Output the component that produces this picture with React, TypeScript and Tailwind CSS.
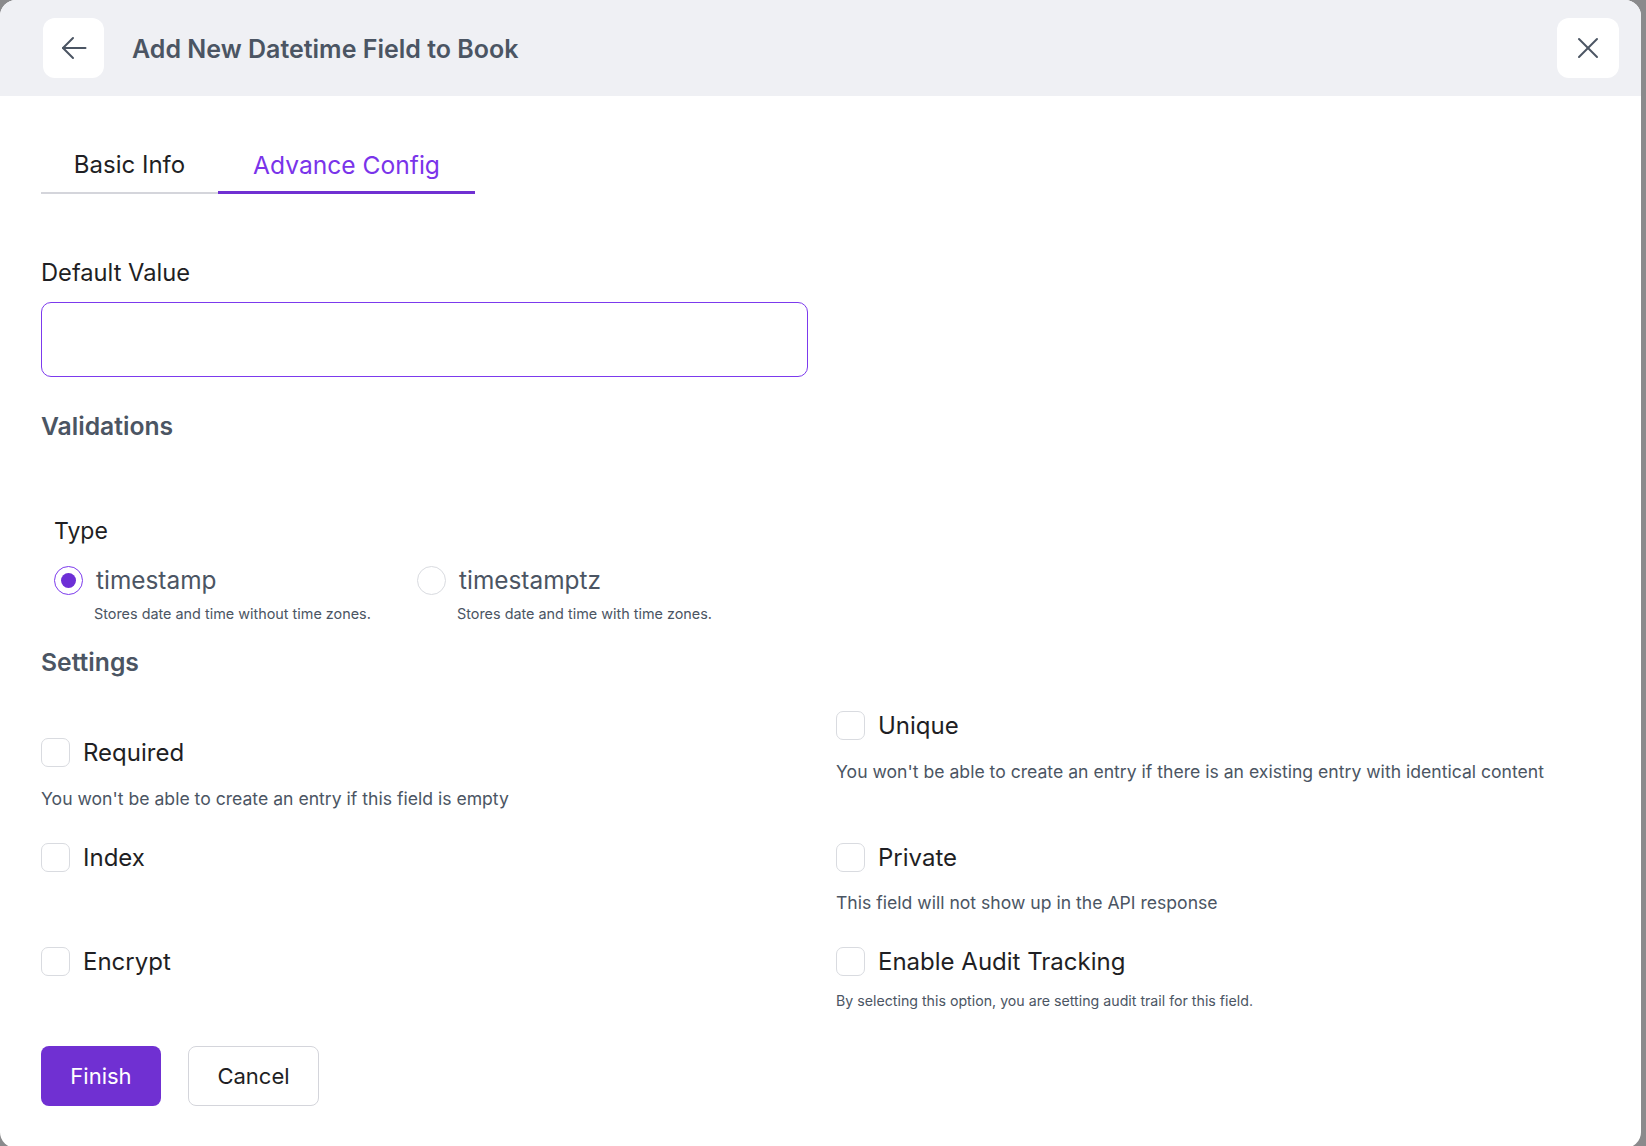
import React from "react";

const font = { fontFamily: "Inter, 'Noto Sans', 'Liberation Sans', sans-serif" };

function BackIcon() {
  return (
    <svg width="26" height="24" viewBox="0 0 26 24" fill="none" stroke="#4b5563" strokeWidth="2" strokeLinecap="round" strokeLinejoin="round">
      <path d="M24.5 12H2" />
      <path d="M12 2L2 12l10 10" />
    </svg>
  );
}

function CloseIcon() {
  return (
    <svg width="22" height="22" viewBox="0 0 22 22" fill="none" stroke="#4b5563" strokeWidth="2" strokeLinecap="round">
      <path d="M2 2l18 18" />
      <path d="M20 2L2 20" />
    </svg>
  );
}

function Radio({ checked }: { checked?: boolean }) {
  return (
    <span
      className={
        checked
          ? "w-[29px] h-[29px] rounded-full border-[1.5px] border-[#7c3aed] flex items-center justify-center shrink-0"
          : "w-[29px] h-[29px] rounded-full border border-[#d9dbe0] shrink-0"
      }
    >
      {checked && <span className="w-[15px] h-[15px] rounded-full bg-[#6d2fd6]" />}
    </span>
  );
}

function RadioOption({ label, desc, checked }: { label: string; desc: string; checked?: boolean }) {
  return (
    <div className="w-[363px]">
      <div className="flex items-center h-[32px] gap-[13px]">
        <Radio checked={checked} />
        <span className="text-[24.4px] leading-[32px] text-[#4b5563]">{label}</span>
      </div>
      <div className="mt-[8px] ml-[40px] text-[14.4px] leading-[20px] text-[#4b5563]">{desc}</div>
    </div>
  );
}

function Check({ label, desc, small, descGap = 18 }: { label: string; desc?: string; small?: boolean; descGap?: number }) {
  return (
    <div>
      <label className="flex items-center gap-[13px] h-[29px]">
        <span className="w-[29px] h-[29px] rounded-[7px] border border-[#d9dbe0] bg-white shrink-0" />
        <span className="text-[24px] leading-[32px] text-[#1f1f24]">{label}</span>
      </label>
      {desc && (
        <div
          className={
            small
              ? "mt-[15px] text-[14.2px] leading-[20px] text-[#4b5563]"
              : descGap === 17
              ? "mt-[17px] text-[17.6px] leading-[28px] text-[#4b5563]"
              : "mt-[18px] text-[17.6px] leading-[28px] text-[#4b5563]"
          }
        >
          {desc}
        </div>
      )}
    </div>
  );
}

export default function App() {
  return (
    <div className="w-[1646px] h-[1146px] overflow-hidden bg-[#8a8a8c]" style={font}>
      <div className="w-[1641px] h-[1148px] rounded-2xl bg-white overflow-hidden flex flex-col">
        {/* header */}
        <div className="h-[96px] bg-[#eff0f4] flex items-center pl-[43px] pr-[22px] shrink-0">
          <button className="w-[61px] h-[60px] bg-white rounded-xl flex items-center justify-center">
            <BackIcon />
          </button>
          <h1 className="ml-[28px] pt-[3px] text-[25px] font-semibold text-[#4b5563]">
            Add New Datetime Field to Book
          </h1>
          <button className="ml-auto w-[62px] h-[60px] bg-white rounded-xl flex items-center justify-center">
            <CloseIcon />
          </button>
        </div>

        {/* body */}
        <div className="px-[41px]">
          {/* tabs */}
          <div className="mt-[43px] flex items-end">
            <div className="w-[177px] text-center text-[24px] leading-[32px] pt-[10px] pb-[11px] border-b-2 border-[#d4d5db] text-[#1f1f24]">
              Basic Info
            </div>
            <div className="w-[257px] text-center text-[24.6px] leading-[32px] pt-[10px] pb-[10px] border-b-[3px] border-[#7030d2] text-[#7a34ea]">
              Advance Config
            </div>
          </div>

          <div className="mt-[63px] text-[23.7px] leading-[32px] text-[#1f1f24]">Default Value</div>
          <input className="mt-[13px] block w-[767px] h-[75px] border border-[#7c3aed] rounded-[10px] outline-none px-4 text-[20px]" />

          <div className="mt-[33px] text-[24.7px] leading-[32px] font-semibold text-[#4b5563]">Validations</div>

          <div className="pl-[13px]">
            <div className="mt-[74px] text-[23px] leading-[30px] text-[#1f1f24]">Type</div>
            <div className="mt-[18px] flex">
              <RadioOption checked label="timestamp" desc="Stores date and time without time zones." />
              <RadioOption label="timestamptz" desc="Stores date and time with time zones." />
            </div>
          </div>

          <div className="mt-[22px] text-[24.7px] leading-[32px] font-semibold text-[#4b5563]">Settings</div>

          <div className="mt-[33px] grid grid-cols-[795px_1fr] gap-y-[30px] items-start">
            <div className="pt-[27px]">
              <Check label="Required" desc="You won't be able to create an entry if this field is empty" />
            </div>
            <Check
              label="Unique"
              desc="You won't be able to create an entry if there is an existing entry with identical content"
            />
            <Check label="Index" />
            <Check label="Private" desc="This field will not show up in the API response" descGap={17} />
            <Check label="Encrypt" />
            <Check
              label="Enable Audit Tracking"
              small
              desc="By selecting this option, you are setting audit trail for this field."
            />
          </div>

          <div className="mt-[35px] flex gap-[27px]">
            <button className="w-[120px] h-[60px] rounded-lg bg-[#7030d2] text-white text-[22px]">Finish</button>
            <button className="w-[131px] h-[60px] rounded-lg border border-[#d4d5db] bg-white text-[#1f1f24] text-[22px]">
              Cancel
            </button>
          </div>
        </div>
      </div>
    </div>
  );
}
